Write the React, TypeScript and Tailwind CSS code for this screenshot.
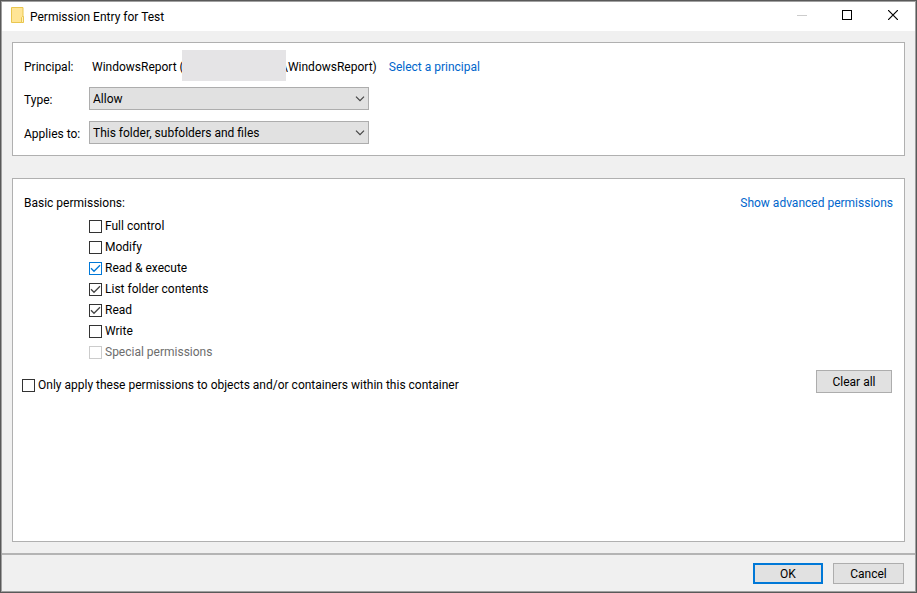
import { useState } from "react";
import type { ReactNode } from "react";

interface Permission {
  id: string;
  label: string;
  disabled?: boolean;
  hot?: boolean;
}

const PERMISSIONS: Permission[] = [
  { id: "full",    label: "Full control" },
  { id: "modify",  label: "Modify" },
  { id: "execute", label: "Read & execute", hot: true },
  { id: "list",    label: "List folder contents" },
  { id: "read",    label: "Read" },
  { id: "write",   label: "Write" },
  { id: "special", label: "Special permissions", disabled: true },
];

const TYPES = ["Allow", "Deny"];
const SCOPES = ["This folder, subfolders and files", "This folder only", "Files only"];

function FolderIcon() {
  return (
    <svg width="14" height="19" viewBox="0 0 14 19" aria-hidden="true">
      <path d="M.5.5h11.500v15H.5z" fill="#ffe596" stroke="#e9c64f" />
      <path d="M10.500 15.500v-5l1-1h1v6z" fill="#fff0b8" stroke="#e9c64f" />
    </svg>
  );
}

function TitleBar() {
  return (
    <header className="flex h-[29px] shrink-0 items-center bg-white pl-[9px]">
      <FolderIcon />
      <h1 className="flex-1 pl-[5px]">Permission Entry for Test</h1>
      <div className="flex h-full pb-[3px]">
        <button type="button" disabled aria-label="Minimize" className="flex w-[42px] items-center justify-center">
          <svg width="10" height="10" viewBox="0 0 10 10" shapeRendering="crispEdges">
            <path d="M0 5.500h10" stroke="#cccccc" />
          </svg>
        </button>
        <button type="button" aria-label="Maximize" className="flex w-[48px] items-center justify-center">
          <svg width="10" height="10" viewBox="0 0 10 10" shapeRendering="crispEdges">
            <path d="M.5.5h9v9h-9z" fill="none" stroke="#000" />
          </svg>
        </button>
        <button type="button" aria-label="Close" className="flex w-[44px] items-center justify-center">
          <svg width="10" height="10" viewBox="0 0 10 10">
            <path d="M0 0l10 10M10 0L0 10" stroke="#000" strokeWidth="1.2" />
          </svg>
        </button>
      </div>
    </header>
  );
}

function Select({ id, options }: { id: string; options: string[] }) {
  return (
    <div className="relative w-[280px]">
      <select
        id={id}
        className="block h-[23px] w-full appearance-none border border-[#adadad] bg-[#e1e1e1] pl-[3px] leading-4"
      >
        {options.map((o) => (
          <option key={o}>{o}</option>
        ))}
      </select>
      <svg className="pointer-events-none absolute top-[9px] right-1" width="10" height="6" viewBox="0 0 10 6">
        <path d="M1 .7l4 4 4-4" fill="none" stroke="#444" strokeWidth="1.2" />
      </svg>
    </div>
  );
}

interface CheckProps {
  label: string;
  checked: boolean;
  onChange: () => void;
  disabled?: boolean;
  hot?: boolean;
}

function Check({ label, checked, onChange, disabled, hot }: CheckProps) {
  return (
    <label className={`flex h-[21px] w-fit items-center gap-[3px] ${disabled ? "text-[#6d6d6d]" : ""}`}>
      <span className="grid">
        <input
          type="checkbox"
          checked={checked}
          disabled={disabled}
          onChange={onChange}
          className={`col-start-1 row-start-1 size-[13px] appearance-none border bg-white ${
            disabled ? "border-[#cccccc]" : hot ? "border-[#0078d7]" : "border-[#333333]"
          }`}
        />
        {checked && (
          <svg className="pointer-events-none col-start-1 row-start-1" width="13" height="13" viewBox="0 0 13 13">
            <path d="M2 6.300l3 3L11 3.300" fill="none" stroke={hot ? "#0078d7" : "#444444"} strokeWidth="1.3" />
          </svg>
        )}
      </span>
      <span className="pb-px">{label}</span>
    </label>
  );
}

function PushButton({ className, children, onClick }: { className: string; children: ReactNode; onClick?: () => void }) {
  return (
    <button type="button" onClick={onClick} className={`bg-[#e1e1e1] text-center leading-4 ${className}`}>
      {children}
    </button>
  );
}

export default function App() {
  const [granted, setGranted] = useState<string[]>(["execute", "list", "read"]);
  const [onlyHere, setOnlyHere] = useState(false);

  const toggle = (id: string) =>
    setGranted((g) => (g.includes(id) ? g.filter((x) => x !== id) : [...g, id]));

  return (
    <div className="flex min-h-screen flex-col border border-[#595959] font-[Roboto,'Open_Sans',sans-serif] text-[12px] leading-4 text-black">
      <div className="flex flex-1 flex-col border border-[#a0a0a0] bg-[#f0f0f0]">
        <TitleBar />

        <main className="flex flex-1 flex-col gap-[22px] px-[10px] pt-[11px] pb-[11px]">
          {/* Principal, type and scope */}
          <section className="border border-[#b0b0b0] bg-white px-[11px] pt-[7px] pb-[11px]">
            <div className="mb-[6px] flex h-[31px] items-center">
              <span className="w-[68px] pt-[2px]">Principal:</span>
              <span className="w-[90px] pt-[2px] whitespace-nowrap">WindowsReport (</span>
              {/* the machine name is masked, the mask covers the edge of the text after it */}
              <span className="z-10 -mr-[3px] h-full w-[104px] bg-[#e5e4e6]" />
              <span className="pt-[2px]">\WindowsReport)</span>
              <a href="#principal" className="ml-3 pt-[2px] text-[#0066cc]">Select a principal</a>
            </div>
            <div className="flex flex-col gap-[11px]">
              <div className="flex items-center">
                <label htmlFor="type" className="w-[65px] pt-[2px]">Type:</label>
                <Select id="type" options={TYPES} />
              </div>
              <div className="flex items-center">
                <label htmlFor="scope" className="w-[65px] pt-[2px] whitespace-nowrap">Applies to:</label>
                <Select id="scope" options={SCOPES} />
              </div>
            </div>
          </section>

          {/* Permissions */}
          <section className="flex-1 border border-[#b0b0b0] bg-white px-[11px] pt-4">
            <div className="flex items-center justify-between">
              <h2>Basic permissions:</h2>
              <a href="#advanced" className="text-[#0066cc]">Show advanced permissions</a>
            </div>
            <div className="mt-[5px] ml-[65px]">
              {PERMISSIONS.map((p) => (
                <Check
                  key={p.id}
                  label={p.label}
                  disabled={p.disabled}
                  hot={p.hot}
                  checked={granted.includes(p.id)}
                  onChange={() => toggle(p.id)}
                />
              ))}
            </div>
            <div className="mt-[7px] -ml-[2px] flex items-start justify-between">
              <div className="pt-[5px]">
                <Check
                  label="Only apply these permissions to objects and/or containers within this container"
                  checked={onlyHere}
                  onChange={() => setOnlyHere(!onlyHere)}
                />
              </div>
              <PushButton className="mr-px h-[23px] w-[76px] border border-[#adadad]" onClick={() => setGranted([])}>
                Clear all
              </PushButton>
            </div>
          </section>
        </main>

        <footer className="flex justify-end gap-[10px] border-t-2 border-[#b4b4b4] px-[11px] pt-2 pb-[7px]">
          <PushButton className="h-[21px] w-[70px] border-2 border-[#0078d7]">OK</PushButton>
          <PushButton className="h-[21px] w-[71px] border border-[#adadad]">Cancel</PushButton>
        </footer>
      </div>
    </div>
  );
}
